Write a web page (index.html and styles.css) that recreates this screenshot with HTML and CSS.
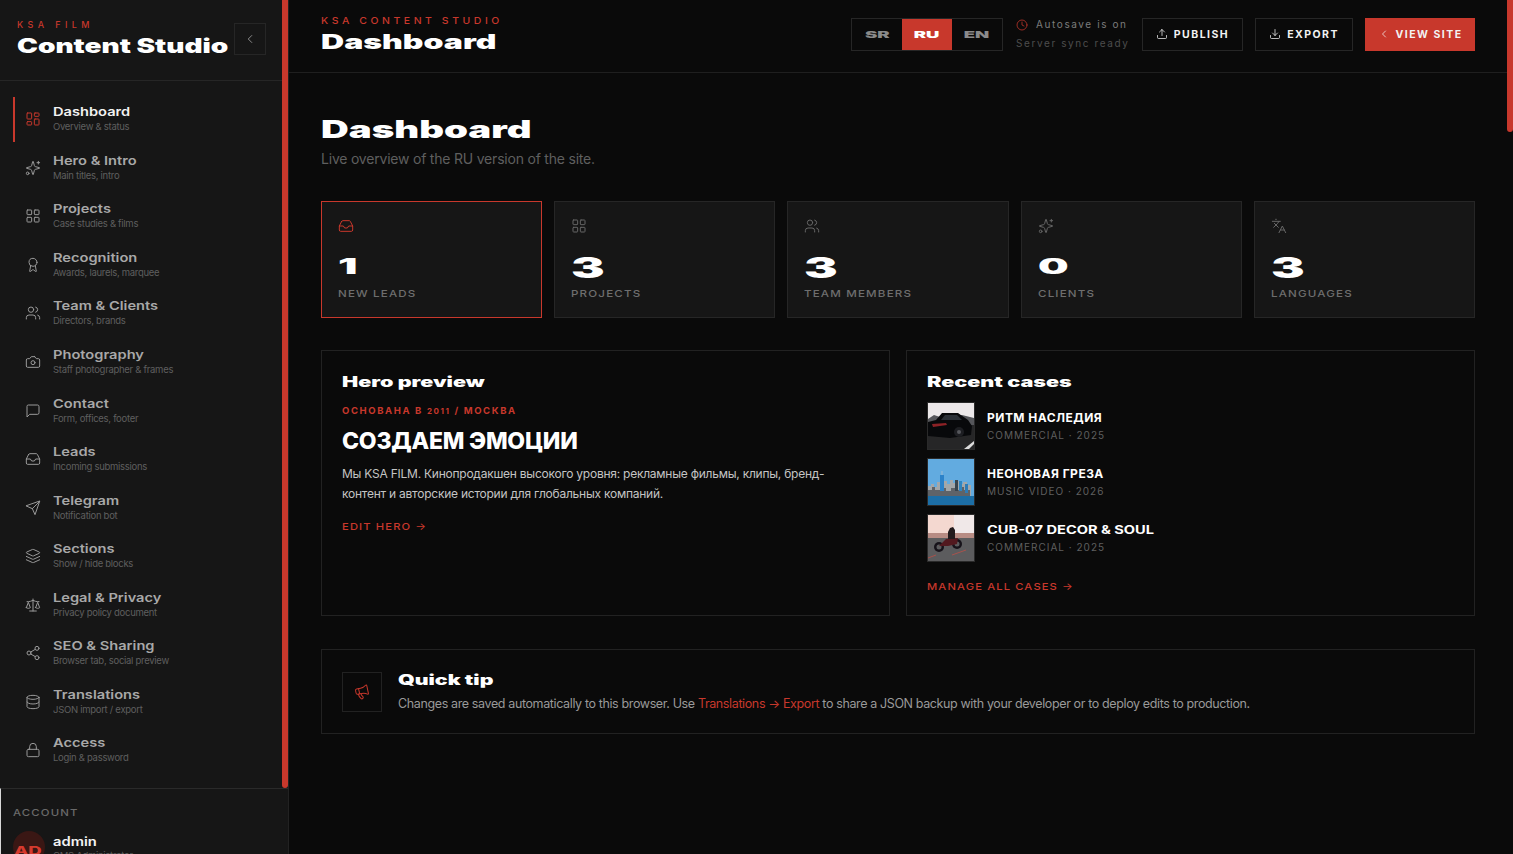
FILE: index.html
```html
<!DOCTYPE html>
<html lang="en">
<head>
    <meta charset="UTF-8">
    <title>Content Studio</title>
    <link rel="stylesheet" href="styles.css">
</head>
<body>
    <svg class="sprite" xmlns="http://www.w3.org/2000/svg">
        <symbol id="i-dashboard" viewBox="0 0 24 24"><rect x="3" y="3" width="7" height="9" rx="1"/><rect x="14" y="3" width="7" height="5" rx="1"/><rect x="14" y="12" width="7" height="9" rx="1"/><rect x="3" y="16" width="7" height="5" rx="1"/></symbol>
        <symbol id="i-sparkles" viewBox="0 0 24 24"><path d="M9.937 15.5A2 2 0 0 0 8.5 14.063l-6.135-1.582a.5.5 0 0 1 0-.962L8.5 9.936A2 2 0 0 0 9.937 8.5l1.582-6.135a.5.5 0 0 1 .963 0L14.063 8.5A2 2 0 0 0 15.5 9.937l6.135 1.581a.5.5 0 0 1 0 .964L15.5 14.063a2 2 0 0 0-1.437 1.437l-1.582 6.135a.5.5 0 0 1-.963 0z"/><path d="M20 2v4"/><path d="M22 4h-4"/><circle cx="4" cy="20" r="2"/></symbol>
        <symbol id="i-grid" viewBox="0 0 24 24"><rect x="3" y="3" width="7" height="7" rx="1"/><rect x="14" y="3" width="7" height="7" rx="1"/><rect x="14" y="14" width="7" height="7" rx="1"/><rect x="3" y="14" width="7" height="7" rx="1"/></symbol>
        <symbol id="i-award" viewBox="0 0 24 24"><path d="m15.477 12.89 1.515 8.526a.5.5 0 0 1-.81.47l-3.58-2.687a1 1 0 0 0-1.197 0l-3.586 2.686a.5.5 0 0 1-.81-.469l1.514-8.526"/><circle cx="12" cy="8" r="6"/></symbol>
        <symbol id="i-users" viewBox="0 0 24 24"><path d="M16 21v-2a4 4 0 0 0-4-4H6a4 4 0 0 0-4 4v2"/><path d="M16 3.128a4 4 0 0 1 0 7.744"/><path d="M22 21v-2a4 4 0 0 0-3-3.87"/><circle cx="9" cy="7" r="4"/></symbol>
        <symbol id="i-camera" viewBox="0 0 24 24"><path d="M14.5 4h-5L7 7H4a2 2 0 0 0-2 2v9a2 2 0 0 0 2 2h16a2 2 0 0 0 2-2V9a2 2 0 0 0-2-2h-3l-2.5-3z"/><circle cx="12" cy="13" r="3"/></symbol>
        <symbol id="i-message" viewBox="0 0 24 24"><path d="M21 15a2 2 0 0 1-2 2H7l-4 4V5a2 2 0 0 1 2-2h14a2 2 0 0 1 2 2z"/></symbol>
        <symbol id="i-inbox" viewBox="0 0 24 24"><polyline points="22 12 16 12 14 15 10 15 8 12 2 12"/><path d="M5.45 5.11 2 12v6a2 2 0 0 0 2 2h16a2 2 0 0 0 2-2v-6l-3.45-6.89A2 2 0 0 0 16.76 4H7.24a2 2 0 0 0-1.79 1.11z"/></symbol>
        <symbol id="i-send" viewBox="0 0 24 24"><path d="m22 2-7 20-4-9-9-4Z"/><path d="M22 2 11 13"/></symbol>
        <symbol id="i-layers" viewBox="0 0 24 24"><path d="m12.83 2.18a2 2 0 0 0-1.66 0L2.6 6.08a1 1 0 0 0 0 1.83l8.58 3.91a2 2 0 0 0 1.66 0l8.58-3.9a1 1 0 0 0 0-1.83Z"/><path d="m22 17.65-9.17 4.16a2 2 0 0 1-1.66 0L2 17.65"/><path d="m22 12.65-9.17 4.16a2 2 0 0 1-1.66 0L2 12.65"/></symbol>
        <symbol id="i-scale" viewBox="0 0 24 24"><path d="m16 16 3-8 3 8c-.87.65-1.92 1-3 1s-2.13-.35-3-1Z"/><path d="m2 16 3-8 3 8c-.87.65-1.92 1-3 1s-2.13-.35-3-1Z"/><path d="M7 21h10"/><path d="M12 3v18"/><path d="M3 7h2c2 0 5-1 7-2 2 1 5 2 7 2h2"/></symbol>
        <symbol id="i-share" viewBox="0 0 24 24"><circle cx="18" cy="5" r="3"/><circle cx="6" cy="12" r="3"/><circle cx="18" cy="19" r="3"/><path d="m8.59 13.51 6.83 3.98"/><path d="m15.41 6.51-6.82 3.98"/></symbol>
        <symbol id="i-database" viewBox="0 0 24 24"><ellipse cx="12" cy="5" rx="9" ry="3"/><path d="M3 5V19A9 3 0 0 0 21 19V5"/><path d="M3 12A9 3 0 0 0 21 12"/></symbol>
        <symbol id="i-lock" viewBox="0 0 24 24"><rect x="3" y="11" width="18" height="11" rx="2"/><path d="M7 11V7a5 5 0 0 1 10 0v4"/></symbol>
        <symbol id="i-clock" viewBox="0 0 24 24"><circle cx="12" cy="12" r="10"/><polyline points="12 6 12 12 16 14"/></symbol>
        <symbol id="i-upload" viewBox="0 0 24 24"><path d="M21 15v4a2 2 0 0 1-2 2H5a2 2 0 0 1-2-2v-4"/><polyline points="17 8 12 3 7 8"/><line x1="12" y1="3" x2="12" y2="15"/></symbol>
        <symbol id="i-download" viewBox="0 0 24 24"><path d="M21 15v4a2 2 0 0 1-2 2H5a2 2 0 0 1-2-2v-4"/><polyline points="7 10 12 15 17 10"/><line x1="12" y1="15" x2="12" y2="3"/></symbol>
        <symbol id="i-chevron" viewBox="0 0 24 24"><path d="m15 18-6-6 6-6"/></symbol>
        <symbol id="i-languages" viewBox="0 0 24 24"><path d="m5 8 6 6"/><path d="m4 14 6-6 2-3"/><path d="M2 5h12"/><path d="M7 2h1"/><path d="m22 22-5-10-5 10"/><path d="M14 18h6"/></symbol>
        <symbol id="i-megaphone" viewBox="0 0 24 24"><g transform="rotate(-12 12 12)"><path d="M11 6a13 13 0 0 0 8.4-2.8A1 1 0 0 1 21 4v12a1 1 0 0 1-1.6.8A13 13 0 0 0 11 14H5a2 2 0 0 1-2-2V8a2 2 0 0 1 2-2z"/><path d="M6 14a12 12 0 0 0 2.4 7.2 2 2 0 0 0 3.2-2.4A8 8 0 0 1 10 14"/><path d="M8 6v8"/></g></symbol>
    </svg>

    <aside class="sidebar">
        <div class="side-head">
            <div>
                <div class="side-kicker">KSA FILM</div>
                <div class="side-title"><span>Content Studio</span></div>
            </div>
            <button class="collapse-btn"><svg class="icon"><use href="#i-chevron"/></svg></button>
        </div>

        <nav class="side-nav">
            <a class="nav-item active"><svg class="icon"><use href="#i-dashboard"/></svg><div><div class="nav-title"><span>Dashboard</span></div><div class="nav-sub">Overview &amp; status</div></div></a>
            <a class="nav-item"><svg class="icon"><use href="#i-sparkles"/></svg><div><div class="nav-title"><span>Hero &amp; Intro</span></div><div class="nav-sub">Main titles, intro</div></div></a>
            <a class="nav-item"><svg class="icon"><use href="#i-grid"/></svg><div><div class="nav-title"><span>Projects</span></div><div class="nav-sub">Case studies &amp; films</div></div></a>
            <a class="nav-item"><svg class="icon"><use href="#i-award"/></svg><div><div class="nav-title"><span>Recognition</span></div><div class="nav-sub">Awards, laurels, marquee</div></div></a>
            <a class="nav-item"><svg class="icon"><use href="#i-users"/></svg><div><div class="nav-title"><span>Team &amp; Clients</span></div><div class="nav-sub">Directors, brands</div></div></a>
            <a class="nav-item"><svg class="icon"><use href="#i-camera"/></svg><div><div class="nav-title"><span>Photography</span></div><div class="nav-sub">Staff photographer &amp; frames</div></div></a>
            <a class="nav-item"><svg class="icon"><use href="#i-message"/></svg><div><div class="nav-title"><span>Contact</span></div><div class="nav-sub">Form, offices, footer</div></div></a>
            <a class="nav-item"><svg class="icon"><use href="#i-inbox"/></svg><div><div class="nav-title"><span>Leads</span></div><div class="nav-sub">Incoming submissions</div></div></a>
            <a class="nav-item"><svg class="icon"><use href="#i-send"/></svg><div><div class="nav-title"><span>Telegram</span></div><div class="nav-sub">Notification bot</div></div></a>
            <a class="nav-item"><svg class="icon"><use href="#i-layers"/></svg><div><div class="nav-title"><span>Sections</span></div><div class="nav-sub">Show / hide blocks</div></div></a>
            <a class="nav-item"><svg class="icon"><use href="#i-scale"/></svg><div><div class="nav-title"><span>Legal &amp; Privacy</span></div><div class="nav-sub">Privacy policy document</div></div></a>
            <a class="nav-item"><svg class="icon"><use href="#i-share"/></svg><div><div class="nav-title"><span>SEO &amp; Sharing</span></div><div class="nav-sub">Browser tab, social preview</div></div></a>
            <a class="nav-item"><svg class="icon"><use href="#i-database"/></svg><div><div class="nav-title"><span>Translations</span></div><div class="nav-sub">JSON import / export</div></div></a>
            <a class="nav-item"><svg class="icon"><use href="#i-lock"/></svg><div><div class="nav-title"><span>Access</span></div><div class="nav-sub">Login &amp; password</div></div></a>
        </nav>

        <div class="account">
            <div class="account-label"><span>ACCOUNT</span></div>
            <div class="account-row">
                <div class="avatar"><span>AD</span></div>
                <div>
                    <div class="account-name"><span>admin</span></div>
                    <div class="nav-sub">CMS Administrator</div>
                </div>
            </div>
        </div>
        <div class="scroll-thumb side-thumb"></div>
    </aside>

    <main class="main">
        <header class="topbar">
            <div>
                <div class="top-kicker"><span>KSA CONTENT STUDIO</span></div>
                <div class="top-title"><span>Dashboard</span></div>
            </div>
            <div class="top-actions">
                <div class="lang-switch">
                    <div class="lang"><span>SR</span></div>
                    <div class="lang on"><span>RU</span></div>
                    <div class="lang"><span>EN</span></div>
                </div>
                <div class="autosave">
                    <div class="autosave-line"><svg class="icon"><use href="#i-clock"/></svg>Autosave is on</div>
                    <div class="autosave-line dim">Server sync ready</div>
                </div>
                <button class="top-btn publish"><svg class="icon"><use href="#i-upload"/></svg>PUBLISH</button>
                <button class="top-btn export"><svg class="icon"><use href="#i-download"/></svg>EXPORT</button>
                <button class="top-btn view"><svg class="icon"><use href="#i-chevron"/></svg>VIEW SITE</button>
            </div>
        </header>

        <div class="content">
            <h1 class="page-title"><span>Dashboard</span></h1>
            <p class="page-sub">Live overview of the RU version of the site.</p>

            <section class="stats">
                <div class="stat hot"><svg class="icon"><use href="#i-inbox"/></svg><div class="stat-num low"><span>1</span></div><div class="stat-label"><span>NEW LEADS</span></div></div>
                <div class="stat"><svg class="icon"><use href="#i-grid"/></svg><div class="stat-num"><span>3</span></div><div class="stat-label"><span>PROJECTS</span></div></div>
                <div class="stat"><svg class="icon"><use href="#i-users"/></svg><div class="stat-num"><span>3</span></div><div class="stat-label"><span>TEAM MEMBERS</span></div></div>
                <div class="stat"><svg class="icon"><use href="#i-sparkles"/></svg><div class="stat-num low"><span>0</span></div><div class="stat-label"><span>CLIENTS</span></div></div>
                <div class="stat"><svg class="icon"><use href="#i-languages"/></svg><div class="stat-num"><span>3</span></div><div class="stat-label"><span>LANGUAGES</span></div></div>
            </section>

            <section class="panels">
                <div class="panel">
                    <h3 class="panel-title"><span>Hero preview</span></h3>
                    <div class="hero-kicker">ОСНОВАНА В <span class="small-num">2011</span> / МОСКВА</div>
                    <div class="hero-head">СОЗДАЕМ ЭМОЦИИ</div>
                    <p class="hero-text">Мы KSA FILM. Кинопродакшен высокого уровня: рекламные фильмы, клипы, бренд-контент и авторские истории для глобальных компаний.</p>
                    <a class="panel-link"><span>EDIT HERO →</span></a>
                </div>
                <div class="panel">
                    <h3 class="panel-title"><span>Recent cases</span></h3>
                    <div class="case-list">
                        <div class="case">
                            <svg class="thumb" viewBox="0 0 46 46" preserveAspectRatio="none">
                                <rect width="46" height="46" fill="#ece8e9"/>
                                <path d="M0 16 L6 12 L12 14 L18 11 L24 13 L34 12 L46 15 V22 H0Z" fill="#55565a"/>
                                <rect y="22" width="46" height="24" fill="#262627"/>
                                <path d="M0 19 L8 17 L14 10 L30 10 L40 17 L44 23 L43 32 L22 35 L0 33Z" fill="#08090b"/>
                                <path d="M17 12 L29 12 L34 17 L13 17Z" fill="#2b3036"/>
                                <path d="M4 21 L18 20 L19 22 L5 24Z" fill="#8c2226"/>
                                <circle cx="31" cy="29" r="5" fill="#1d1e22"/>
                                <circle cx="31" cy="29" r="2" fill="#55575c"/>
                                <path d="M36 46 L46 38 L46 41 L41 46Z" fill="#dcdcdc"/>
                            </svg>
                            <div><div class="case-name">РИТМ НАСЛЕДИЯ</div><div class="case-meta">COMMERCIAL · 2025</div></div>
                        </div>
                        <div class="case">
                            <svg class="thumb" viewBox="0 0 46 46" preserveAspectRatio="none">
                                <rect width="46" height="46" fill="#62abe0"/>
                                <path d="M0 27h3v-2h3v3h3v-5h3v3h4v-4h3v3h3v-4h3v3h4v-2h3v3h3v-2h4v3h4v15H0Z" fill="#a3a7aa"/>
                                <path d="M0 31h4v-3h3v3h5v-2h6v3h5v-3h4v2h5v-3h4v3h6v7H0Z" fill="#5f6368"/>
                                <rect x="13" y="12" width="2" height="4" fill="#7fb2d8"/>
                                <rect x="12" y="16" width="4" height="16" fill="#2c82c9"/>
                                <rect x="27" y="21" width="3" height="11" fill="#39454f"/>
                                <rect x="31" y="22" width="3" height="10" fill="#2f86c2"/>
                                <rect x="37" y="25" width="3" height="9" fill="#2d7cb8"/>
                                <rect y="37" width="46" height="9" fill="#1c6ea6"/>
                            </svg>
                            <div><div class="case-name">НЕОНОВАЯ ГРЕЗА</div><div class="case-meta">MUSIC VIDEO · 2026</div></div>
                        </div>
                        <div class="case">
                            <svg class="thumb" viewBox="0 0 46 46" preserveAspectRatio="none">
                                <rect width="46" height="46" fill="#f0e8e8"/>
                                <rect width="26" height="18" fill="#f4d8d0"/>
                                <rect y="18" width="46" height="5" fill="#b88c84"/>
                                <rect y="23" width="46" height="23" fill="#5c5c5e"/>
                                <circle cx="11" cy="32" r="5" fill="#17131a"/>
                                <circle cx="29" cy="29" r="5" fill="#17131a"/>
                                <circle cx="11" cy="32" r="2.5" fill="#5c5c5e"/>
                                <circle cx="29" cy="29" r="2.5" fill="#5c5c5e"/>
                                <path d="M11 31 L18 24 L30 23 L29 29 L20 31Z" fill="#52191f"/>
                                <path d="M20 24 L20 17 L22 13 L25 12 L27 15 L27 24Z" fill="#221a1c"/>
                                <path d="M0 43 L8 40 M24 40 L38 35" stroke="#a8524c" stroke-width="1"/>
                            </svg>
                            <div><div class="case-name wide"><span>CUB-07 DECOR &amp; SOUL</span></div><div class="case-meta">COMMERCIAL · 2025</div></div>
                        </div>
                    </div>
                    <a class="panel-link"><span>MANAGE ALL CASES →</span></a>
                </div>
            </section>

            <section class="tip">
                <div class="tip-icon"><svg class="icon"><use href="#i-megaphone"/></svg></div>
                <div>
                    <h3 class="tip-title"><span>Quick tip</span></h3>
                    <p class="tip-text">Changes are saved automatically to this browser. Use <a>Translations → Export</a> to share a JSON backup with your developer or to deploy edits to production.</p>
                </div>
            </section>
        </div>
        <div class="scroll-thumb main-thumb"></div>
    </main>
</body>
</html>
```

FILE: styles.css
```css
/* Global */
* {
    margin: 0;
    padding: 0;
    box-sizing: border-box;
}

body {
    display: flex;
    height: 100vh;
    overflow: hidden;
    background: #0a0a0a;
    color: #fff;
    font-family: "Inter", sans-serif;
}

.sprite {
    display: none;
}

.icon {
    width: 16px;
    height: 16px;
    flex: none;
    fill: none;
    stroke: currentColor;
    stroke-width: 1.5;
    stroke-linecap: round;
    stroke-linejoin: round;
}

/* Wide display type, squeezed out of Inter */
.side-title span, .top-title span, .page-title span, .panel-title span, .tip-title span,
.nav-title span, .stat-num span, .stat-label span, .panel-link span, .top-kicker span,
.lang span, .account-label span, .account-name span, .avatar span, .case-name.wide span {
    display: inline-block;
    transform-origin: left center;
    white-space: nowrap;
}

/* Sidebar */
.sidebar {
    position: relative;
    width: 289px;
    flex: none;
    height: 100vh;
    display: flex;
    flex-direction: column;
    overflow: hidden;
    background: #161616;
    border-right: 1px solid #222;
}

.side-head {
    height: 81px;
    flex: none;
    display: flex;
    align-items: center;
    justify-content: space-between;
    padding: 0 22px 3px 17px;
    border-bottom: 1px solid #262626;
}

.side-kicker {
    font-size: 9px;
    font-weight: 500;
    letter-spacing: 0.49em;
    color: #c8382c;
    margin-bottom: 4px;
}

.side-title {
    font-size: 20px;
    line-height: 24px;
    font-weight: 900;
}

.side-title span {
    transform: scaleX(1.4);
}

.collapse-btn {
    width: 32px;
    height: 32px;
    display: flex;
    align-items: center;
    justify-content: center;
    background: none;
    border: 1px solid #262626;
    color: #999;
}

.collapse-btn .icon {
    width: 14px;
    height: 14px;
}

.side-nav {
    flex: none;
    height: 707px;
    padding: 15.5px 0 0 13px;
    display: flex;
    flex-direction: column;
    gap: 3px;
}

.nav-item {
    height: 45.55px;
    flex: none;
    display: flex;
    align-items: center;
    gap: 12px;
    padding-left: 12px;
    color: #999;
}

.nav-item.active {
    border-left: 2px solid #c8382c;
    padding-left: 10px;
    color: #c8382c;
}

.nav-title {
    font-size: 12px;
    line-height: 16px;
    font-weight: 600;
    color: #a8a8a8;
}

.nav-title span {
    transform: scaleX(1.22);
}

.active .nav-title {
    color: #f2f2f2;
}

.nav-sub {
    font-size: 9.5px;
    line-height: 14px;
    letter-spacing: -0.03em;
    color: #5f5f5f;
    white-space: nowrap;
}

.account {
    flex: 1;
    padding: 18px 12px 0;
    border-top: 1px solid #2a2a2a;
    border-left: 1px solid #d8d8d8;
}

.account-label {
    font-size: 9.5px;
    line-height: 12px;
    font-weight: 500;
    letter-spacing: 0.1em;
    color: #6a6a6a;
    margin-bottom: 12px;
}

.account-label span {
    transform: scaleX(1.2);
}

.account-row {
    display: flex;
    gap: 8px;
}

.avatar {
    width: 32px;
    height: 32px;
    flex: none;
    border-radius: 50%;
    background: #3a1714;
    color: #d63a2e;
    font-size: 12px;
    font-weight: 800;
    line-height: 32px;
    padding-left: 1px;
    overflow: hidden;
}

.avatar span {
    transform: scaleX(1.55);
    padding-top: 4px;
}

.account-name {
    padding-top: 2px;
    margin-bottom: -2px;
    font-size: 12.5px;
    line-height: 18px;
    font-weight: 600;
    color: #f2f2f2;
}

.account-name span {
    transform: scaleX(1.18);
}

/* Overlay scrollbars */
.scroll-thumb {
    position: absolute;
    top: 0;
    width: 6px;
    background: #c8382c;
    border-radius: 0 0 3px 3px;
}

.side-thumb {
    left: 282px;
    height: 788px;
}

.main-thumb {
    right: 0;
    height: 132px;
}

/* Main */
.main {
    position: relative;
    flex: 1;
    min-width: 0;
    height: 100vh;
    overflow: hidden;
    background: #0a0a0a;
}

.topbar {
    height: 73px;
    display: flex;
    align-items: center;
    justify-content: space-between;
    padding: 0 38px 4px 32px;
    border-bottom: 1px solid #1f1f1f;
}

.top-kicker {
    font-size: 9.5px;
    line-height: 14px;
    font-weight: 500;
    letter-spacing: 0.34em;
    color: #c8382c;
    margin-bottom: 2px;
}

.top-kicker span {
    transform: scaleX(1.1);
}

.top-title {
    font-size: 20px;
    line-height: 24px;
    font-weight: 900;
}

.top-title span {
    transform: scaleX(1.6);
}

.top-actions {
    display: flex;
    align-items: center;
    gap: 12px;
}

.lang-switch {
    display: flex;
    width: 152px;
    height: 33px;
    border: 1px solid #262626;
}

.lang {
    flex: 1;
    display: flex;
    align-items: center;
    justify-content: center;
    font-size: 9.5px;
    font-weight: 900;
    color: #8a8a8a;
}

.lang span {
    transform: scaleX(1.95);
    transform-origin: center;
}

.lang.on {
    background: #c8382c;
    color: #fff;
}

.autosave {
    width: 114px;
    margin-left: 1px;
    font-size: 10px;
    line-height: 19px;
    letter-spacing: 0.16em;
    color: #7c7c7c;
    white-space: nowrap;
}

.autosave-line {
    display: flex;
    align-items: center;
    gap: 8px;
}

.autosave-line .icon {
    width: 12px;
    height: 12px;
    color: #c8382c;
}

.autosave-line.dim {
    color: #4d4d4d;
}

.top-btn {
    height: 33px;
    display: flex;
    align-items: center;
    justify-content: center;
    gap: 6px;
    background: none;
    border: 1px solid #262626;
    color: #f2f2f2;
    font-family: inherit;
    font-size: 10.5px;
    font-weight: 700;
    letter-spacing: 0.14em;
}

.top-btn .icon {
    width: 12px;
    height: 12px;
}

.publish {
    width: 101px;
}

.export {
    width: 98px;
}

.view {
    width: 110px;
    background: #c8382c;
    border-color: #c8382c;
}

.content {
    padding: 39px 38px 0 32px;
}

.page-title {
    font-size: 24px;
    line-height: 36px;
    font-weight: 900;
}

.page-title span {
    transform: scaleX(1.6);
}

.page-sub {
    margin-top: -1px;
    font-size: 14px;
    line-height: 24px;
    letter-spacing: -0.015em;
    color: #5f5f5f;
}

/* Stat cards */
.stats {
    display: grid;
    grid-template-columns: repeat(5, 1fr);
    gap: 12px;
    margin-top: 30px;
}

.stat {
    height: 117px;
    padding: 16px;
    background: #161616;
    border: 1px solid #262626;
    color: #666;
}

.stat.hot {
    border-color: #c8382c;
    color: #c8382c;
}

.stat .icon {
    display: block;
}

.stat-num {
    margin-top: 16px;
    height: 32px;
    padding-top: 2px;
    font-size: 28px;
    line-height: 32px;
    font-weight: 900;
    color: #fff;
}

.stat-num span {
    transform: scaleX(1.8);
}

.stat-num.low {
    padding-top: 1px;
    font-size: 21px;
}

.stat-num.low span {
    transform: scaleX(2.05);
}

.stat-label {
    margin-top: 5px;
    font-size: 9.5px;
    line-height: 14px;
    font-weight: 500;
    letter-spacing: 0.1em;
    color: #6e6e6e;
}

.stat-label span {
    transform: scaleX(1.22);
}

/* Panels */
.panels {
    display: grid;
    grid-template-columns: 1fr 1fr;
    gap: 16px;
    margin-top: 32px;
}

.panel {
    height: 266px;
    padding: 21px 20px;
    border: 1px solid #222;
}

.panel-title {
    font-size: 14px;
    line-height: 20px;
    font-weight: 900;
}

.panel-title span {
    transform: scaleX(1.54);
}

.hero-kicker {
    margin-top: 12px;
    font-size: 9.5px;
    line-height: 14px;
    font-weight: 700;
    letter-spacing: 0.17em;
    color: #c8382c;
}

.small-num {
    font-size: 8px;
}

.hero-head {
    margin-top: 8px;
    font-size: 23px;
    line-height: 30px;
    font-weight: 800;
    letter-spacing: -0.01em;
}

.hero-text {
    margin-top: 8px;
    max-width: 490px;
    font-size: 12px;
    line-height: 20px;
    letter-spacing: -0.02em;
    color: #c4c4c4;
}

.panel-link {
    display: block;
    margin-top: 16px;
    font-size: 9.5px;
    line-height: 14px;
    font-weight: 500;
    letter-spacing: 0.1em;
    color: #c8382c;
}

.panel-link span {
    transform: scaleX(1.18);
}

.case-list {
    margin-top: 10px;
    display: flex;
    flex-direction: column;
    gap: 8px;
}

.case {
    display: flex;
    align-items: center;
    gap: 12px;
}

.thumb {
    width: 48px;
    height: 48px;
    flex: none;
    border: 1px solid #2a2a2a;
}

.case-name {
    font-size: 12px;
    line-height: 16px;
    font-weight: 700;
    letter-spacing: 0.04em;
}

.case-name.wide {
    font-size: 11.5px;
    letter-spacing: 0;
}

.case-name.wide span {
    transform: scaleX(1.27);
}

.case-meta {
    margin-top: 2px;
    font-size: 10px;
    line-height: 14px;
    letter-spacing: 0.1em;
    color: #5f5f5f;
}

.panel .case-list + .panel-link {
    margin-top: 18px;
}

/* Tip */
.tip {
    display: flex;
    align-items: center;
    gap: 16px;
    height: 85px;
    margin-top: 33px;
    padding: 0 20px;
    border: 1px solid #222;
}

.tip-icon {
    width: 40px;
    height: 40px;
    flex: none;
    display: flex;
    align-items: center;
    justify-content: center;
    border: 1px solid #222;
    color: #c8382c;
}

.tip-title {
    font-size: 14px;
    line-height: 20px;
    font-weight: 900;
}

.tip-title span {
    transform: scaleX(1.52);
}

.tip-text {
    margin-top: 4px;
    font-size: 12.5px;
    line-height: 20px;
    letter-spacing: -0.03em;
    color: #999;
}

.tip-text a {
    color: #c8382c;
}
```
